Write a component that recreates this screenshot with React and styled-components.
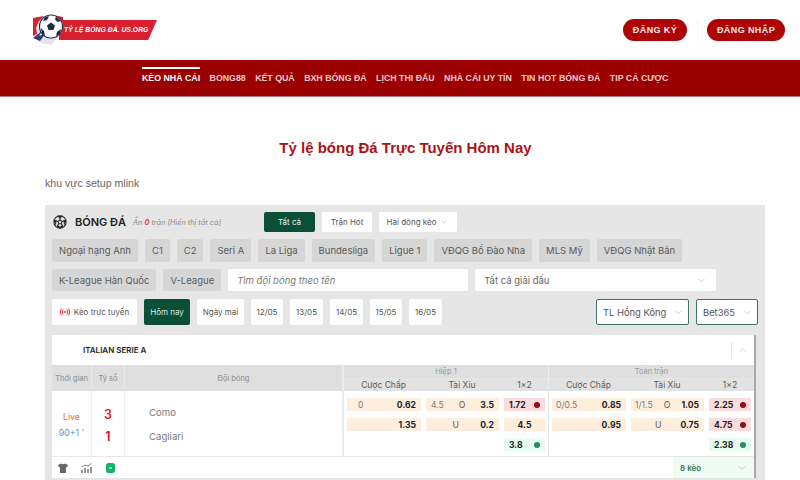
import React from 'react';
import styled, { createGlobalStyle } from 'styled-components';
import { ChevronDown, ChevronUp } from 'lucide-react';

const GlobalStyle = createGlobalStyle`
  html, body { margin: 0; padding: 0; background: #fff; }
  body { font-family: "Liberation Sans", Arial, sans-serif; }
  #root { height: 480px; overflow: hidden; }
  * { box-sizing: border-box; }
`;

const Header = styled.header`
  height: 60px;
  padding: 14px 15px 0 32px;
  display: flex;
  justify-content: space-between;
  align-items: flex-start;
`;
const Logo = styled.div`
  display: flex;
  align-items: center;
  width: 125px;
  height: 32px;
`;
const LogoBanner = styled.div`
  width: 98px;
  height: 20px;
  margin-left: -6px;
  padding-left: 5px;
  background: #d8202f;
  clip-path: polygon(0 0, 100% 0, 91% 100%, 0 100%);
  color: #fff;
  font-size: 6.85px;
  font-weight: 700;
  font-style: italic;
  line-height: 20px;
  white-space: nowrap;
`;
const HeaderActions = styled.div`
  display: flex;
  align-items: center;
  margin-top: 5px;
`;
const HeaderDivider = styled.span`
  width: 1px;
  height: 22px;
  margin: 0 9.5px;
  background: #f4f4f4;
`;
const PillButton = styled.button`
  height: 22px;
  width: ${(p) => p.$w}px;
  border: 0;
  border-radius: 11px;
  background: #ad0505;
  color: #fbe6e6;
  font-family: inherit;
  font-size: 9px;
  font-weight: 700;
  letter-spacing: 0.4px;
  padding: 0;
`;
const Nav = styled.nav`
  height: 37px;
  background: #9b0000;
  border-bottom: 1px solid #b9777a;
  padding-left: 142px;
  display: flex;
  gap: 9.4px;
`;
const NavItem = styled.a`
  height: 36px;
  padding-top: 7px;
  line-height: 22px;
  font-size: 8.8px;
  font-weight: 700;
  white-space: nowrap;
  color: ${(p) => (p.$active ? '#fff' : '#f3c9c9')};
  position: relative;
  &::before {
    content: '';
    display: ${(p) => (p.$active ? 'block' : 'none')};
    position: absolute;
    top: 7px;
    left: 0;
    right: 0;
    height: 2px;
    background: #fff;
  }
`;
const Title = styled.h1`
  margin: 41px 0 0;
  padding-left: 11px;
  height: 20px;
  text-align: center;
  font-size: 15px;
  line-height: 20px;
  font-weight: 700;
  color: #ab1416;
`;
const Note = styled.p`
  margin: 18px 0 0 45px;
  height: 14px;
  font-size: 10.6px;
  line-height: 14px;
  color: #666;
`;
const Panel = styled.section`
  width: 720px;
  margin: 15px 0 0 45px;
  height: 275px;
  padding: 7px 7px 0;
  background: #e6e6e6;
  font-family: Inter, "Liberation Sans", sans-serif;
`;
const TopRow = styled.div`
  display: flex;
  align-items: center;
  height: 20px;
`;
const SportIcon = styled.svg`
  width: 14px;
  height: 14px;
  margin-left: 1px;
`;
const SportName = styled.strong`
  margin-left: 8px;
  font-size: 11px;
  font-weight: 600;
  color: #222;
`;
const HiddenNote = styled.em`
  margin-left: 7px;
  width: 131px;
  font-size: 7.3px;
  color: #8a8a8a;
  white-space: nowrap;
  b { color: #e0434b; }
`;
const FilterButton = styled.div`
  height: 20px;
  width: ${(p) => p.$w}px;
  margin-right: 7px;
  display: flex;
  align-items: center;
  justify-content: center;
  gap: 3px;
  border-radius: 2px;
  font-size: 8px;
  background: ${(p) => (p.$active ? '#0b4f36' : '#fff')};
  color: ${(p) => (p.$active ? '#e8f4ee' : '#555')};
`;
const ChipRow = styled.div`
  display: flex;
  gap: 7px;
  margin-top: 7px;
`;
const Chip = styled.span`
  height: ${(p) => p.$h || 23}px;
  padding: 0 7px;
  display: flex;
  align-items: center;
  border-radius: 2px;
  background: #d6d6d6;
  color: #5a5a5a;
  font-size: 9.5px;
  white-space: nowrap;
`;
const SearchBox = styled.div`
  width: 240px;
  height: 22px;
  padding-left: 9px;
  display: flex;
  align-items: center;
  border-radius: 2px;
  background: #fff;
  color: #777;
  font-size: 9.5px;
  font-style: italic;
`;
const LeagueSelect = styled.div`
  width: 241px;
  height: 22px;
  padding: 0 9px;
  display: flex;
  align-items: center;
  justify-content: space-between;
  border-radius: 2px;
  background: #fff;
  color: #666;
  font-size: 9.5px;
`;
const DateRow = styled.div`
  display: flex;
  gap: 7px;
  margin-top: 8px;
  height: 26px;
`;
const DateButton = styled.div`
  width: ${(p) => p.$w}px;
  display: flex;
  align-items: center;
  justify-content: center;
  gap: 4px;
  border-radius: 2px;
  font-size: 8px;
  white-space: nowrap;
  background: ${(p) => (p.$active ? '#0b4f36' : '#fff')};
  color: ${(p) => (p.$active ? '#d7ece2' : '#555')};
`;
const Spacer = styled.div`
  flex: 1;
`;
const OddsSelect = styled.div`
  width: ${(p) => p.$w}px;
  display: flex;
  align-items: center;
  justify-content: space-between;
  padding: 0 4px 0 6px;
  border: 1px solid #3f7562;
  border-radius: 2px;
  background: #fff;
  color: #555;
  font-size: 9.4px;
`;
const Card = styled.div`
  width: 702px;
  margin-top: 10px;
  background: #fff;
  box-shadow: 2px 0 0 #a9a9a9;
`;
const LeagueBar = styled.div`
  height: 30px;
  padding: 0 5px 0 31px;
  display: flex;
  align-items: center;
  justify-content: space-between;
  font-size: 8px;
  font-weight: 600;
  color: #1d1d1d;
`;
const Collapse = styled.div`
  display: flex;
  align-items: center;
  height: 16px;
  padding-left: 5px;
  border-left: 1px solid #e4e4e4;
`;
const TableGrid = styled.div`
  display: grid;
  grid-template-columns: 40px 33px 218px 205px 206px;
`;
const HeadCell = styled.div`
  height: 26px;
  display: flex;
  align-items: center;
  justify-content: center;
  background: #dfdfdf;
  border-right: 1px solid #e9e9e9;
  color: #8c8c8c;
  font-size: 7.5px;
`;
const HeadGroup = styled.div`
  height: 26px;
  background: #dfdfdf;
  border-left: 1px solid #eeeeee;
`;
const GroupName = styled.div`
  height: 14px;
  line-height: 14px;
  text-align: center;
  font-size: 7.5px;
  color: #999;
  border-bottom: 1px solid #e6e6e6;
`;
const GroupCols = styled.div`
  display: grid;
  grid-template-columns: 79px 78px 1fr;
  height: 12px;
  line-height: 12px;
  text-align: center;
  font-size: 8.5px;
  color: #5c5c5c;
  background: #e2e2e2;
`;
const BodyCell = styled.div`
  height: 66px;
  border-right: 1px solid #eeeeee;
  border-bottom: 1px solid #e6e6e6;
`;
const TimeCell = styled(BodyCell)`
  display: flex;
  flex-direction: column;
  align-items: center;
  padding-top: 20px;
  gap: 5px;
  font-size: 8.8px;
  line-height: 11px;
`;
const LiveText = styled.span`
  color: #ee6a3a;
`;
const MinuteText = styled.span`
  color: #5b9bd5;
`;
const ScoreCell = styled(BodyCell)`
  display: flex;
  flex-direction: column;
  align-items: center;
  padding-top: 16px;
  gap: 6px;
  font-size: 12.5px;
  line-height: 16px;
  font-weight: 600;
  color: #d9161c;
`;
const TeamCell = styled(BodyCell)`
  display: flex;
  flex-direction: column;
  padding: 15px 0 0 24px;
  gap: 10px;
  font-size: 9.6px;
  line-height: 14px;
  color: #7a7a7a;
`;
const OddsCell = styled.div`
  height: 66px;
  padding: 7px 3px 0;
  display: grid;
  grid-template-columns: 74px 73px 1fr;
  grid-auto-rows: 13px;
  column-gap: 5px;
  row-gap: 7px;
  border-left: 1px solid #e6e6e6;
  border-bottom: 1px solid #e6e6e6;
`;
const OddsBox = styled.div`
  display: flex;
  align-items: center;
  justify-content: ${(p) => (p.$center ? 'center' : 'space-between')};
  padding: 0 5px 0 ${(p) => p.$left ?? 5}px;
  font-size: 8.6px;
  color: #7b7b7b;
  white-space: nowrap;
  background: ${(p) => ({ plain: '#fdeede', down: '#fbdcdc', up: '#e4fbee', empty: 'transparent' }[p.$kind || 'plain'])};
  b { color: #222; font-weight: 700; }
`;
const MarkerDot = styled.i`
  width: 6px;
  height: 6px;
  border-radius: 50%;
  background: ${(p) => (p.$up ? '#2e8a62' : '#8c0f16')};
`;
const Letter = styled.span`
  color: #555;
`;
const FooterRow = styled.div`
  height: 21px;
  padding-left: 6px;
  display: flex;
  align-items: center;
`;
const ToolIcon = styled.svg`
  width: ${(p) => p.$w}px;
  height: 10px;
  margin-right: ${(p) => p.$gap}px;
`;
const MoreOdds = styled.div`
  margin-left: auto;
  width: 81px;
  height: 21px;
  padding: 0 6px 0 7px;
  display: flex;
  align-items: center;
  justify-content: space-between;
  background: #effbf4;
  color: #2c7a55;
  font-size: 8px;
  font-weight: 600;
`;
const LogoSvg = styled.svg`
  flex-shrink: 0;
  position: relative;
  z-index: 1;
`;

const navItems = ['BONG88', 'KẾT QUẢ', 'BXH BÓNG ĐÁ', 'LỊCH THI ĐẤU', 'NHÀ CÁI UY TÍN', 'TIN HOT BÓNG ĐÁ', 'TIP CÁ CƯỢC'];
const leagues = ['Ngoại hạng Anh', 'C1', 'C2', 'Seri A', 'La Liga', 'Bundesliga', 'Ligue 1', 'VĐQG Bồ Đào Nha', 'MLS Mỹ', 'VĐQG Nhật Bản'];
const dates = [['Hôm nay', 46], ['Ngày mai', 47], ['12/05', 32], ['13/05', 33], ['14/05', 33], ['15/05', 32], ['16/05', 33]];

const Chevron = ({ size = 11, color = '#9a9a9a' }) => <ChevronDown size={size} color={color} strokeWidth={1} />;

const LogoMark = () => (
  <LogoSvg width="33" height="32" viewBox="0 0 33 32">
    <path d="M2 4 L20 1 L31 3 L30 18 L19 31 L9 29 L2 23 Z" fill="#e3e3e8" />
    <path d="M1 4 L12 2 L7 7 L4 14 L5 20 L1 22 Z" fill="#d8202f" />
    <path d="M20 1 L31 3 L31 9 L27 4 Z" fill="#d8202f" />
    <path d="M1 24 L10 17 L7 22 L13 20 L8 27 Z" fill="#2b3a78" />
    <circle cx="19" cy="12.5" r="11.5" fill="#fff" stroke="#23304f" strokeWidth="1.2" />
    <path d="M19 8.5 L23 11.5 L21.5 16 L16.5 16 L15 11.5 Z" fill="#1e2a45" />
    <path d="M13 3 L17 2 L15 6 L11 7 Z M24 2.5 L28.5 7 L25.5 8 L23 5.5 Z M9 14 L12 17 L13 22 L10 20 Z M25 18 L29 15 L28 20 L24 22 Z" fill="#1e2a45" />
  </LogoSvg>
);

const LiveIcon = () => (
  <svg width="10" height="8" viewBox="0 0 10 8" fill="none" stroke="#e5343d" strokeWidth="1">
    <circle cx="5" cy="4" r="1" fill="#e5343d" stroke="none" />
    <path d="M3 1.5 Q1.8 4 3 6.5 M7 1.5 Q8.2 4 7 6.5 M1.2 .5 Q-.4 4 1.2 7.5 M8.8 .5 Q10.4 4 8.8 7.5" />
  </svg>
);

const OddsGroup = ({ first }) => (first ? (
  <OddsCell>
    <OddsBox $left={11}><span>0</span><b>0.62</b></OddsBox>
    <OddsBox><span>4.5</span><Letter>O</Letter><b>3.5</b></OddsBox>
    <OddsBox $kind="down"><b>1.72</b><MarkerDot /></OddsBox>
    <OddsBox><span /><b>1.35</b></OddsBox>
    <OddsBox><span /><Letter>U</Letter><b>0.2</b></OddsBox>
    <OddsBox $center><b>4.5</b></OddsBox>
    <OddsBox $kind="empty" />
    <OddsBox $kind="empty" />
    <OddsBox $kind="up"><b>3.8</b><MarkerDot $up /></OddsBox>
  </OddsCell>
) : (
  <OddsCell>
    <OddsBox $left={4}><span>0/0.5</span><b>0.85</b></OddsBox>
    <OddsBox $left={4}><span>1/1.5</span><Letter>O</Letter><b>1.05</b></OddsBox>
    <OddsBox $kind="down"><b>2.25</b><MarkerDot /></OddsBox>
    <OddsBox><span /><b>0.95</b></OddsBox>
    <OddsBox><span /><Letter>U</Letter><b>0.75</b></OddsBox>
    <OddsBox $kind="down"><b>4.75</b><MarkerDot /></OddsBox>
    <OddsBox $kind="empty" />
    <OddsBox $kind="empty" />
    <OddsBox $kind="up"><b>2.38</b><MarkerDot $up /></OddsBox>
  </OddsCell>
));

const GroupHead = ({ name }) => (
  <HeadGroup>
    <GroupName>{name}</GroupName>
    <GroupCols>
      <span>Cược Chấp</span>
      <span>Tài Xỉu</span>
      <span>1×2</span>
    </GroupCols>
  </HeadGroup>
);

export default function App() {
  return (
    <>
      <GlobalStyle />
      <Header>
        <Logo>
          <LogoMark />
          <LogoBanner>TỶ LỆ BÓNG ĐÁ. US.ORG</LogoBanner>
        </Logo>
        <HeaderActions>
          <PillButton $w={64}>ĐĂNG KÝ</PillButton>
          <HeaderDivider />
          <PillButton $w={78}>ĐĂNG NHẬP</PillButton>
        </HeaderActions>
      </Header>
      <Nav>
        <NavItem $active>KÈO NHÀ CÁI</NavItem>
        {navItems.map((item) => <NavItem key={item}>{item}</NavItem>)}
      </Nav>
      <Title>Tỷ lệ bóng Đá Trực Tuyến Hôm Nay</Title>
      <Note>khu vực setup mlink</Note>
      <Panel>
        <TopRow>
          <SportIcon viewBox="0 0 24 24" fill="none" stroke="#2a2a2a" strokeWidth="1.8">
            <circle cx="12" cy="12" r="10.5" />
            <path d="M12 8.5l3.4 2.5-1.3 4h-4.2l-1.3-4z" />
            <path d="M12 8.5V5M15.4 11l3.4-1.2M14.1 15l2.1 3M9.9 15l-2.1 3M8.6 11L5.2 9.8" />
            <path d="M9 2l3 3 3-3zM22 9l-3.2.8L19.5 15zM2 9l3.2.8L4.5 15zM7 19.5l1-1.5 3 2.5v1.5zM17 19.5L16 18l-3 2.5v1.5z" fill="#2a2a2a" />
          </SportIcon>
          <SportName>BÓNG ĐÁ</SportName>
          <HiddenNote>Ẩn <b>0</b> trận [Hiển thị tất cả]</HiddenNote>
          <FilterButton $w={51} $active>Tất cả</FilterButton>
          <FilterButton $w={50}>Trận Hot</FilterButton>
          <FilterButton $w={78}>Hai dòng kèo <Chevron size={10} /></FilterButton>
        </TopRow>
        <ChipRow>
          {leagues.map((league) => <Chip key={league}>{league}</Chip>)}
        </ChipRow>
        <ChipRow>
          <Chip $h={22}>K-League Hàn Quốc</Chip>
          <Chip $h={22}>V-League</Chip>
          <SearchBox>Tìm đội bóng theo tên</SearchBox>
          <LeagueSelect>Tất cả giải đấu <Chevron /></LeagueSelect>
        </ChipRow>
        <DateRow>
          <DateButton $w={85}><LiveIcon />Kèo trực tuyến</DateButton>
          {dates.map(([label, w], i) => <DateButton key={label} $w={w} $active={i === 0}>{label}</DateButton>)}
          <Spacer />
          <OddsSelect $w={93}>TL Hồng Kông <Chevron /></OddsSelect>
          <OddsSelect $w={62}>Bet365 <Chevron /></OddsSelect>
        </DateRow>
        <Card>
          <LeagueBar>
            ITALIAN SERIE A
            <Collapse><ChevronUp size={12} color="#b5b5b5" strokeWidth={1} /></Collapse>
          </LeagueBar>
          <TableGrid>
            <HeadCell>Thời gian</HeadCell>
            <HeadCell>Tỷ số</HeadCell>
            <HeadCell>Đội bóng</HeadCell>
            <GroupHead name="Hiệp 1" />
            <GroupHead name="Toàn trận" />
            <TimeCell><LiveText>Live</LiveText><MinuteText>90+1 '</MinuteText></TimeCell>
            <ScoreCell><span>3</span><span>1</span></ScoreCell>
            <TeamCell><span>Como</span><span>Cagliari</span></TeamCell>
            <OddsGroup first />
            <OddsGroup />
          </TableGrid>
          <FooterRow>
            <ToolIcon $w={10} $gap={13} viewBox="0 0 10 10">
              <path d="M3 0.5 L0 2 L1 4.5 L2 4 L2 10 L8 10 L8 4 L9 4.5 L10 2 L7 0.5 Q5 2 3 0.5 Z" fill="#666" />
            </ToolIcon>
            <ToolIcon $w={11} $gap={14} viewBox="0 0 11 10" fill="none" stroke="#666">
              <path d="M1 10V7M4 10V5M7 10V6M10 10V4" strokeWidth="1.4" />
              <path d="M.5 4L4 2l3 1 3.5-2.5" strokeWidth=".8" />
            </ToolIcon>
            <ToolIcon $w={9} $gap={0} viewBox="0 0 9 10">
              <rect width="9" height="10" y="0" rx="2.5" fill="#14b36b" />
              <rect x="3" y="4.5" width="3" height="1" fill="#fff" />
            </ToolIcon>
            <MoreOdds>8 kèo <Chevron size={12} /></MoreOdds>
          </FooterRow>
        </Card>
      </Panel>
    </>
  );
}
